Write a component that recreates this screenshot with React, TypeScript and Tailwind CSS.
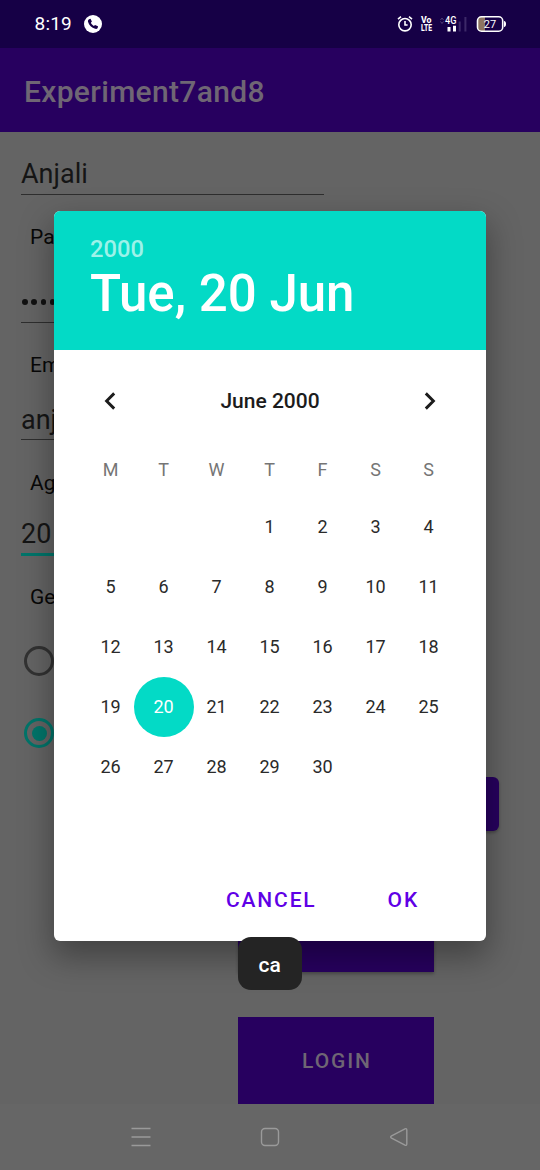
import type { ReactNode } from "react";

const WEEKDAYS = ["M", "T", "W", "T", "F", "S", "S"];
const LEADING_BLANKS = 3;
const DAYS_IN_MONTH = 30;
const SELECTED_DAY = 20;

function StatusBar() {
  return (
    <div className="flex h-12 shrink-0 items-center bg-[#160046] pl-[34.5px] text-white">
      <span className="w-[37.5px] text-[19px] leading-6 tracking-[0.2px]">8:19</span>
      <svg className="ml-3" width="18" height="18" viewBox="0 0 18 18">
        <circle cx="9" cy="9" r="9" fill="#fff" />
        <path
          d="M5 4.2 6.5 3.8 7.9 6.6 6.9 7.8C7.4 9.1 8.5 10.2 9.9 11L11 10 14 11.3 13.7 13C13.2 13.8 12.2 14.1 11.2 13.8 7.7 12.9 5 10 4 6.7 3.8 5.5 4.2 4.6 5 4.2Z"
          fill="#160046"
        />
      </svg>
      <svg className="ml-[295px]" width="16" height="18" viewBox="0 0 16 18" fill="none" stroke="#fff" strokeWidth="1.6">
        <circle cx="8" cy="9.7" r="6.2" />
        <path d="M8 6v4h2.6M1 4.2 4 1.7M15 4.2 12 1.7" />
      </svg>
      <svg className="ml-[7px] overflow-visible" width="13" height="18" viewBox="0 0 13 18" fill="#fff" fontFamily="Roboto, sans-serif" fontWeight="800">
        <text x="1" y="7.8" fontSize="9" textLength="10.5" lengthAdjust="spacingAndGlyphs">Vo</text>
        <text x="1" y="16.3" fontSize="9.5" textLength="11" lengthAdjust="spacingAndGlyphs">LTE</text>
      </svg>
      <svg className="ml-[7px]" width="29" height="18" viewBox="0 0 29 18">
        <path d="M.5 5 2 3 3.5 5M.5 6.5 2 8.5 3.5 6.5" stroke="#534078" strokeWidth="1" fill="none" />
        <path d="M7.5 12h3v4.5h-3zM13 10.8h3v5.7h-3z" fill="#fff" />
        <path d="M18.7 6.5h2v10h-2zM24.4 2h2v14.5h-2z" fill="#3c2868" />
        <text x="5" y="9" fontSize="10.5" fontWeight="500" fill="#fff" fontFamily="Roboto, sans-serif" textLength="11.5" lengthAdjust="spacingAndGlyphs">4G</text>
      </svg>
      <svg className="ml-[6.5px]" width="30" height="18" viewBox="0 0 30 18">
        <path d="M5 2h4v14H5C3 16 2 15 2 13V5c0-2 1-3 3-3Z" fill="#8d7460" />
        <rect x="1.5" y="1.8" width="25.2" height="14.4" rx="4" fill="none" stroke="#fff" strokeWidth="1.6" />
        <path d="M28 6c1.5.2 2 1.2 2 3s-.5 2.8-2 3Z" fill="#fff" />
        <text x="14" y="13" fontSize="11" fill="#fff" fontFamily="Roboto, sans-serif" textAnchor="middle">27</text>
      </svg>
    </div>
  );
}

function Label({ children }: { children: ReactNode }) {
  return <div className="pl-[30px] text-[21px] leading-6 text-[#080808]">{children}</div>;
}

function Form() {
  return (
    <div className="flex h-[972px] shrink-0 flex-col overflow-hidden bg-[#646464] text-[#151515]">
      <div className="mt-[26px] ml-[21px] h-[37px] w-[303px] border-b-[1.5px] border-[#2e2e2e] text-[27px] leading-8">
        Anjali
      </div>
      <div className="mt-[30px]"><Label>Pa</Label></div>
      <div className="mt-[34px] ml-[21px] flex h-10 w-[303px] items-center gap-[2.6px] border-b-[1.5px] border-[#2e2e2e]">
        {[0, 1, 2, 3].map((n) => (
          <span key={n} className="ml-[1.2px] h-[6px] w-[5.4px] -translate-y-px rounded-full bg-[#111]" />
        ))}
      </div>
      <div className="mt-[30px]"><Label>Em</Label></div>
      <div className="mt-[26px] ml-[21px] h-[37px] w-[303px] border-b-[1.5px] border-[#2e2e2e] text-[27px] leading-[34px]">
        anj
      </div>
      <div className="mt-[31px]"><Label>Ag</Label></div>
      <div className="mt-[22px] ml-[21px] h-[39px] w-[303px] border-b-[3px] border-[#00756a] text-[27px] leading-[34px]">
        20
      </div>
      <div className="mt-[29px]"><Label>Ge</Label></div>
      <div className="mt-[37px] ml-6 size-[30px] shrink-0 rounded-full border-[3px] border-[#323232]" />
      <div className="mt-[42px] ml-6 flex size-[30px] shrink-0 items-center justify-center rounded-full border-[3px] border-[#00756a]">
        <div className="size-[15px] rounded-full bg-[#00756a]" />
      </div>
      <div className="mt-[29px] ml-[330px] h-[54px] w-[169px] shrink-0 rounded-md bg-[#27005f] shadow-[0_2px_3px_#0004]" />
      <div className="mt-[54px] ml-[238px] h-[87px] w-[196px] shrink-0 bg-[#27005f] shadow-[0_2px_3px_#0004]" />
      <div className="mt-[45px] ml-[238px] flex h-[87px] w-[196px] shrink-0 items-center justify-center bg-[#27005f] pt-0.5 pl-0.5 text-[21px] font-medium tracking-[1.9px] text-[#6f6674]">
        LOGIN
      </div>
    </div>
  );
}

function NavigationBar() {
  return (
    <div className="flex h-[66px] shrink-0 items-center bg-[#666] pl-[131px] text-[#9a9a9a]">
      <svg width="20" height="20" viewBox="0 0 20 20" stroke="currentColor" strokeWidth="1.5">
        <path d="M.5 1.5h19M.5 10h19M.5 18.5h19" />
      </svg>
      <svg className="ml-[109px]" width="20" height="20" viewBox="0 0 20 20" fill="none" stroke="currentColor" strokeWidth="1.4">
        <rect x="1.5" y="1.5" width="17" height="17" rx="3.5" />
      </svg>
      <svg className="ml-[109px]" width="20" height="20" viewBox="0 0 20 20" fill="none" stroke="currentColor" strokeWidth="1.4" strokeLinejoin="round">
        <path d="M16 1.8 2.6 8.8Q.7 10 2.6 11.2L16 18.2Q17.8 18.8 17.8 17V3Q17.8 1.2 16 1.8Z" />
      </svg>
    </div>
  );
}

function Chevron({ direction }: { direction: "left" | "right" }) {
  return (
    <svg width="12" height="20" viewBox="0 0 12 20" fill="none" stroke="#1c1c1c" strokeWidth="2.9">
      <path d={direction === "left" ? "M10.2 2.4 2.6 10l7.6 7.6" : "M1.8 2.4 9.4 10l-7.6 7.6"} />
    </svg>
  );
}

function DatePicker() {
  const days = Array.from({ length: DAYS_IN_MONTH }, (_, i) => i + 1);
  return (
    <div className="absolute top-[210.5px] left-[54px] flex h-[730.5px] w-[432px] flex-col overflow-hidden rounded-md bg-white shadow-[0_14px_32px_2px_rgba(0,0,0,0.34)]">
      <div className="h-[139.5px] shrink-0 bg-[#03dac6] pt-[24.5px] pl-9 font-medium text-white">
        <div className="text-[23.7px] leading-7 text-[#9df2e9]">2000</div>
        <div className="text-[51px] leading-[62px]">Tue, 20 Jun</div>
      </div>
      <div className="flex h-[102px] shrink-0 items-center justify-between pr-[50px] pl-[50px]">
        <Chevron direction="left" />
        <div className="pt-0.5 text-[21px] font-medium text-[#1c1c1c]">June 2000</div>
        <Chevron direction="right" />
      </div>
      <div className="ml-[30px] grid h-[35px] w-[371px] shrink-0 grid-cols-7 items-center text-center text-lg text-[#757575]">
        {WEEKDAYS.map((day, i) => <div key={i}>{day}</div>)}
      </div>
      <div className="mt-2.5 ml-[30px] grid w-[371px] grid-cols-7 text-center text-lg text-[#2a2a2a]">
        {Array.from({ length: LEADING_BLANKS }, (_, i) => <div key={`blank-${i}`} />)}
        {days.map((day) => (
          <div key={day} className="flex h-[60px] items-center justify-center">
            {day === SELECTED_DAY ? (
              <span className="-mx-1 flex size-[60px] shrink-0 items-center justify-center rounded-full bg-[#03dac6] text-white">{day}</span>
            ) : day}
          </div>
        ))}
      </div>
      <div className="mt-auto mb-[26px] flex gap-[71px] pl-[172px] text-[21px] leading-[30px] font-medium tracking-[1.85px] text-[#5f00e6]">
        <span>CANCEL</span>
        <span>OK</span>
      </div>
    </div>
  );
}

export default function App() {
  return (
    <div className="relative flex h-[1170px] w-[540px] flex-col overflow-hidden bg-[#646464] font-['Roboto',sans-serif]">
      <StatusBar />
      <div className="flex h-[84px] shrink-0 items-center bg-[#27005f] pt-0.5 pl-6 text-[30px] font-medium tracking-[0.32px] text-[#6f6674]">
        Experiment7and8
      </div>
      <Form />
      <NavigationBar />
      <DatePicker />
      <div className="absolute top-[937px] left-[237.5px] flex h-[53px] w-[64.5px] items-center justify-center rounded-[13px] bg-[#242424] pt-1 text-[21px] font-medium text-white">
        ca
      </div>
    </div>
  );
}
